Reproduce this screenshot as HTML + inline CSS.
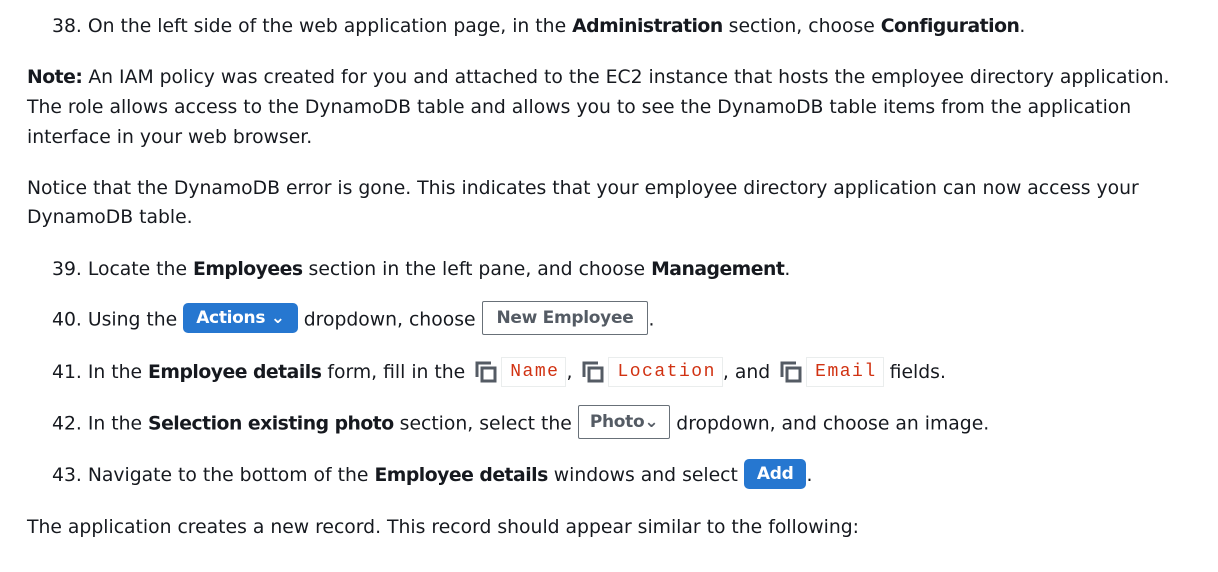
<!DOCTYPE html>
<html><head><meta charset="utf-8"><style>
body{margin:0;width:1218px;height:572px;background:#fff;font-family:"DejaVu Sans",sans-serif;font-size:18.8px;color:#16191f;position:relative;overflow:hidden}
.l{position:absolute;white-space:nowrap;line-height:30px}
b{font-weight:bold;letter-spacing:-0.5px}
.btn{display:inline-block;background:#2677d0;color:#fff;font-weight:bold;border-radius:5px;padding:0 13px;line-height:30px;font-size:17px;vertical-align:middle;margin-top:-4px;letter-spacing:-0.3px}
.ob{display:inline-block;border:1px solid #687078;color:#545b64;font-weight:bold;border-radius:2px;padding:0 11px;line-height:32px;font-size:17px;vertical-align:middle;margin-top:-4px;letter-spacing:-0.3px}
.code{display:inline-block;border:1px solid #eaeded;color:#d13212;font-family:"Liberation Mono",monospace;font-size:18px;letter-spacing:1.5px;padding:0 6px 0 8px;line-height:28px;vertical-align:middle;margin-top:-2px}
.cp{display:inline-block;vertical-align:middle;margin:-2px 4px 0 10px}
</style></head><body>
<div class="l" style="left:52px;top:12px">38. On the left side of the web application page, in the <b>Administration</b> section, choose <b>Configuration</b>.</div>
<div class="l" style="left:27px;top:63px"><b>Note:</b> An IAM policy was created for you and attached to the EC2 instance that hosts the employee directory application.</div>
<div class="l" style="left:27px;top:93px">The role allows access to the DynamoDB table and allows you to see the DynamoDB table items from the application</div>
<div class="l" style="left:27px;top:123px">interface in your web browser.</div>
<div class="l" style="left:27px;top:174px">Notice that the DynamoDB error is gone. This indicates that your employee directory application can now access your</div>
<div class="l" style="left:27px;top:203px">DynamoDB table.</div>
<div class="l" style="left:52px;top:255px">39. Locate the <b>Employees</b> section in the left pane, and choose <b>Management</b>.</div>
<div class="l" style="left:52px;top:305px">40. Using the <span class="btn">Actions &#8964;</span> dropdown, choose <span class="ob" style="padding:0 14px">New Employee</span>.</div>
<div class="l" style="left:52px;top:358px">41. In the <b>Employee details</b> form, fill in the<svg class="cp" width="22" height="22" viewBox="0 0 22 22"><path d="M2 16V2h14" fill="none" stroke="#545b64" stroke-width="3"/><rect x="7" y="7" width="13" height="13" fill="none" stroke="#545b64" stroke-width="3"/></svg><span class="code">Name</span>,<svg class="cp" width="22" height="22" viewBox="0 0 22 22"><path d="M2 16V2h14" fill="none" stroke="#545b64" stroke-width="3"/><rect x="7" y="7" width="13" height="13" fill="none" stroke="#545b64" stroke-width="3"/></svg><span class="code">Location</span>, and<svg class="cp" width="22" height="22" viewBox="0 0 22 22"><path d="M2 16V2h14" fill="none" stroke="#545b64" stroke-width="3"/><rect x="7" y="7" width="13" height="13" fill="none" stroke="#545b64" stroke-width="3"/></svg><span class="code">Email</span> fields.</div>
<div class="l" style="left:52px;top:409px">42. In the <b>Selection existing photo</b> section, select the <span class="ob">Photo&#8964;</span> dropdown, and choose an image.</div>
<div class="l" style="left:52px;top:461px">43. Navigate to the bottom of the <b>Employee details</b> windows and select <span class="btn">Add</span>.</div>
<div class="l" style="left:27px;top:513px">The application creates a new record. This record should appear similar to the following:</div>
</body></html>
